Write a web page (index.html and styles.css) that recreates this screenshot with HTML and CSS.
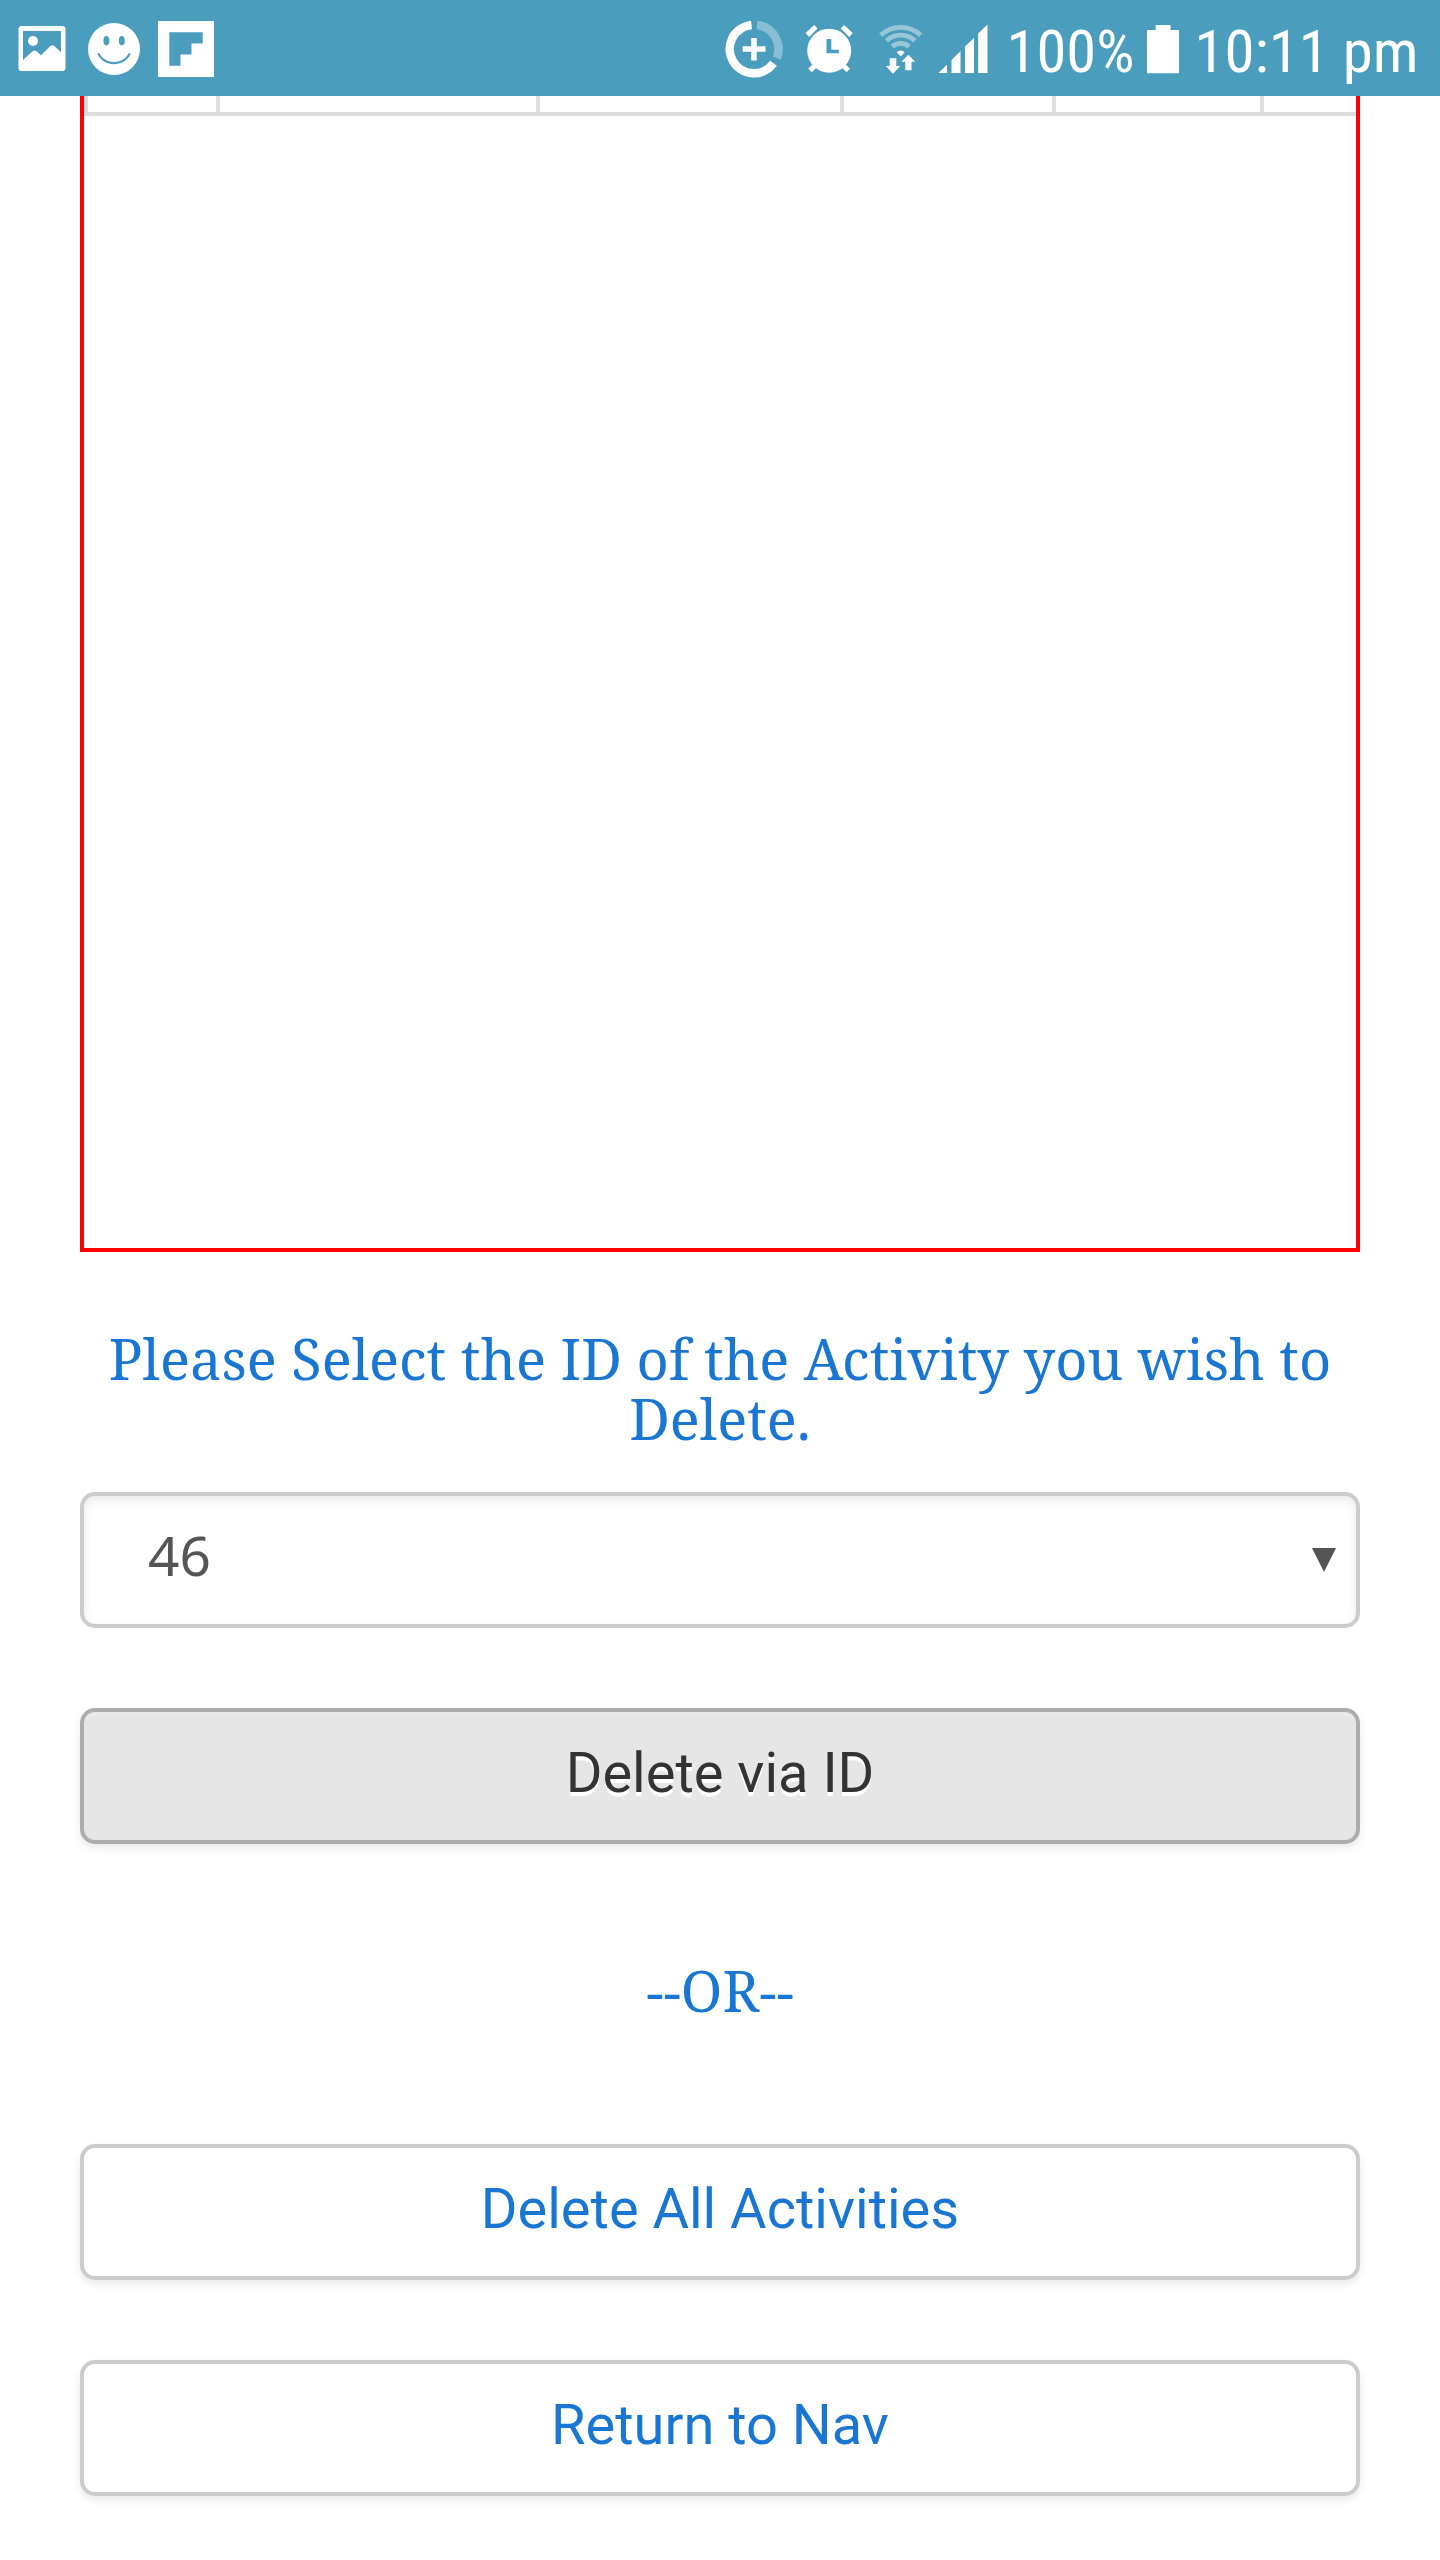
FILE: index.html
```html
<!DOCTYPE html>
<html lang="en">
<head>
<meta charset="utf-8">
<title>Delete Activity</title>
<link rel="stylesheet" href="styles.css">
</head>
<body>
<header class="status">
  <div class="status-group">
    <svg width="48" height="96" viewBox="18 0 48 96"><path fill="#fff" fill-rule="evenodd" d="M21.5 26h41a3 3 0 0 1 3 3v39a3 3 0 0 1-3 3h-41a3 3 0 0 1-3-3V29a3 3 0 0 1 3-3zM23 31V60L32.5 51.2q2-1.5 4 0L41 55.2 50.3 46q2-1.5 4 0L61 52.2V31z"/><circle cx="33" cy="41" r="5" fill="#fff"/></svg>
    <svg class="smile" width="52" height="96" viewBox="88 0 52 96"><circle cx="114" cy="49" r="26" fill="#fff"/><g fill="#4a9dbd"><ellipse cx="106.4" cy="40.6" rx="3" ry="4.7"/><ellipse cx="121.8" cy="40.6" rx="3" ry="4.7"/><path d="M97.300 53.800l1.800-.8c6.500 12 23.500 12 29.800 0l1.800.8c-6.500 14-26.800 14-33.400 0z"/></g></svg>
    <svg width="56" height="96" viewBox="158 0 56 96"><path fill="#fff" fill-rule="evenodd" d="M158 21h56v56h-56zM169.300 32.300V65.700H180.500V54.500H191.500V43.500H202.700V32.300z"/></svg>
  </div>
  <div class="status-group status-right">
    <svg width="58" height="96" viewBox="725 0 58 96"><g fill="none" stroke="#fff" stroke-width="8.500"><path d="M751.500 25A24.200 24.200 0 1 0 773.500 63.300"/><path opacity=".35" d="M757 25A24.200 24.200 0 0 1 776.800 58"/></g><path fill="#fff" d="M751.200 38h5.600v8.300h8.700v5.500h-8.700V60.500h-5.600v-8.700h-8.500v-5.500h8.500z"/></svg>
    <svg width="48" height="96" viewBox="804.500 0 48 96"><g fill="#fff"><circle cx="828.700" cy="50.700" r="22"/><path d="M805 33l8.800-8 3.200 3.500-8.500 8.500zM852.300 33l-8.800-8-3.200 3.500 8.500 8.500z"/></g><path stroke="#fff" stroke-width="5" d="M817 63l-7.500 7.500M840.300 63l7.500 7.500"/><path fill="#4a9dbd" d="M826 39h4.800v10.700h7.500v3.600H826z"/></svg>
    <svg width="43" height="96" viewBox="879 0 43 96"><g fill="none" stroke="#fff" stroke-width="4.800" opacity=".42"><path d="M880.700 35.200a29.500 29.500 0 0 1 40 0"/><path d="M886.400 40.800a21 21 0 0 1 28.600 0"/><path d="M892.200 46.600a12.700 12.700 0 0 1 17 0"/></g><path fill="#fff" d="M896.700 52.300q4-3.800 8 0l-4 4.200zM889.700 58.200h6.600v7.800h3.900l-7.200 7.700-7.200-7.700h3.900zM905.200 70.300v-8.500h-3.900l7.200-7 6.700 7h-3.700v8.500z"/></svg>
    <svg width="50" height="96" viewBox="937.500 0 50 96"><path fill="#fff" d="M938 73l8.500-8.500V73zM951 73V60l9-9V73zM964.500 73V46.500l9-8.500V73zM977.700 73V33.500l9.300-9V73z"/></svg>
    <svg class="status-text" width="126" height="96" viewBox="1008 0 126 96"><text x="1006.500" y="72" textLength="128" lengthAdjust="spacingAndGlyphs">100%</text></svg>
    <svg width="32" height="96" viewBox="1147 0 32 96"><path fill="#fff" d="M1147 30h8.700v-5h14.800v5h8.500v43.300h-32z"/></svg>
    <svg class="status-text" width="220" height="96" viewBox="1197 0 220 96"><text x="1194.500" y="72" textLength="224" lengthAdjust="spacingAndGlyphs">10:11 pm</text></svg>
  </div>
</header>
<main class="page">
  <section class="activities">
    <div class="table-row"><span></span><span></span><span></span><span></span><span></span><span></span></div>
  </section>
  <p class="prompt">Please Select the ID of the Activity you wish to<br>Delete.</p>
  <div class="field select"><span>46</span><svg width="24" height="24" viewBox="0 0 24 24"><path fill="#555" d="M0 0h24L12 24z"/></svg></div>
  <button class="field btn btn-grey">Delete via ID</button>
  <p class="prompt or">--OR--</p>
  <button class="field btn">Delete All Activities</button>
  <button class="field btn">Return to Nav</button>
</main>
</body>
</html>
```
FILE: styles.css
```css
* { box-sizing: border-box; }
body { margin: 0; width: 1440px; height: 2560px; background: #fff; overflow: hidden; }
svg { display: block; flex: none; }
.status { display: flex; justify-content: space-between; height: 96px; padding: 0 23px 0 18px; background: #4a9dbd; }
.status-group { display: flex; }
.smile { margin: 0 18px 0 22px; }
.status-right svg { margin-left: 21.5px; }
.status-right svg:nth-child(3) { margin-left: 26.5px; }
.status-right svg:nth-child(4) { margin-left: 15.5px; }
.status-right svg:nth-child(5) { margin-left: 20.5px; }
.status-right svg:nth-child(6) { margin-left: 13px; }
.status-right svg:nth-child(7) { margin-left: 18px; }
.status-text { overflow: visible; fill: #fff; font-family: "Roboto Condensed", Roboto, sans-serif; font-size: 60px; }
.page { display: flex; flex-direction: column; padding: 0 80px; }
.activities { height: 1156px; border: 4px solid #f00; border-top: 0; }
.table-row { display: grid; grid-template-columns: 132px 320px 304px 212px 208px 96px; height: 20px; border-bottom: 4px solid #ddd; background: #fff; }
.table-row span { border-left: 4px solid #ddd; }
.prompt { margin: 76px 0 0; height: 120px; text-align: center; white-space: nowrap; color: #1976d2; font-family: "Noto Serif", "Droid Serif", "DejaVu Serif Condensed", serif; font-size: 56px; line-height: 60px; }
.or { margin: 116px 0 0; height: 60px; }
.field { width: 100%; height: 136px; border: 4px solid #ccc; border-radius: 15px; background: #fff; font-size: 56px; line-height: 66px; }
.select { display: flex; align-items: center; justify-content: space-between; margin-top: 44px; padding: 0 20px 10px 64px; color: #555; font-family: "Noto Sans", sans-serif; font-size: 55px; box-shadow: inset 0 4px 9px rgba(0,0,0,.085); }
.select svg { margin-top: 10px; }
.btn { margin: 80px 0 0; padding: 0 0 6px; color: #1976d2; font-family: Roboto, sans-serif; text-align: center; box-shadow: 0 4px 9px rgba(0,0,0,.085); }
.btn-grey { color: #333; background: #e6e6e6; border-color: #adadad; text-shadow: 0 4px 0 #fff; box-shadow: inset 0 4px 0 #eaeaea, 0 4px 9px rgba(0,0,0,.085); }
.or + .btn { margin-top: 124px; }
```
